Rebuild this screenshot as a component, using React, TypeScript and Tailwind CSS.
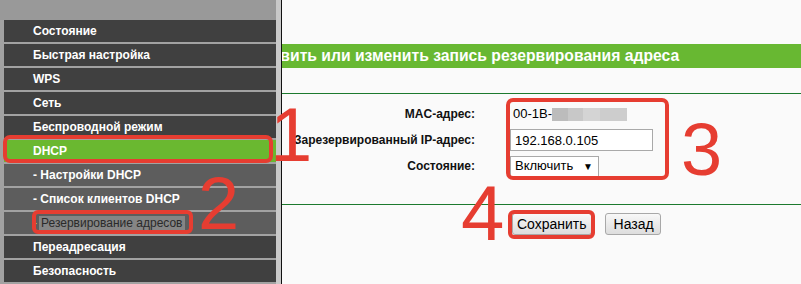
import React from "react";

const font = { fontFamily: '"Liberation Sans", Arial, sans-serif' };

type Item = { label: string; kind: "main" | "active" | "sub" | "selected" };

const menu: Item[] = [
  { label: "Состояние", kind: "main" },
  { label: "Быстрая настройка", kind: "main" },
  { label: "WPS", kind: "main" },
  { label: "Сеть", kind: "main" },
  { label: "Беспроводной режим", kind: "main" },
  { label: "DHCP", kind: "active" },
  { label: "- Настройки DHCP", kind: "sub" },
  { label: "- Список клиентов DHCP", kind: "sub" },
  { label: "Резервирование адресов", kind: "selected" },
  { label: "Переадресация", kind: "main" },
  { label: "Безопасность", kind: "main" },
];

const MenuRow = ({ item }: { item: Item }) => {
  if (item.kind === "selected") {
    return (
      <div className="h-[22px] bg-[#5d5d5d] flex items-center pl-[29px] text-[12px]">
        <span className="text-[#d6d600] mr-[2px]">-</span>
        <span className="bg-[#858585] text-[#2a2a2a] px-[2px] leading-[14px]">{item.label}</span>
      </div>
    );
  }
  const bg =
    item.kind === "active" ? "bg-[#6ab830]" : item.kind === "sub" ? "bg-[#5d5d5d]" : "bg-[#404040]";
  return (
    <div className={`h-[22px] ${bg} flex items-center pl-[29px] text-[12px] font-bold text-white`}>
      {item.label}
    </div>
  );
};

const Sidebar = () => (
  <div className="flex shrink-0 h-[284px]">
    <div className="w-[276px] bg-[#a2a2a2] pl-[4px] flex flex-col">
      <div className="h-[20px] bg-[#999999] -ml-[4px] w-[276px]" />
      <div className="flex flex-col gap-[2px]">
        {menu.map((m) => (
          <MenuRow key={m.label} item={m} />
        ))}
      </div>
    </div>
    <div className="w-[5px] bg-[#c9c9c9]" />
    <div className="w-[1px] bg-[#111]" />
  </div>
);

const Button = ({ children, className }: { children: React.ReactNode; className: string }) => (
  <button
    className={`h-[22px] ${className} text-[14px] text-black border border-[#a8a8a8] rounded-[3px] bg-gradient-to-b from-[#f8f8f8] to-[#dddddd] leading-none`}
  >
    {children}
  </button>
);

const Content = () => (
  <div className="flex-1 bg-[#fafafa] h-[284px] pt-[44px]">
    <div className="h-[24px] bg-[#68b832] overflow-hidden flex items-center">
      <span className="-ml-[41px] whitespace-nowrap text-[15.7px] font-bold text-white">
        Добавить или изменить запись резервирования адреса
      </span>
    </div>
    <div className="mt-[25px] h-[1px] bg-[#1c7a2e]" />
    <div className="pt-[7px] flex flex-col text-[12px]">
      <div className="h-[26px] flex items-center">
        <div className="w-[193px] text-right font-bold text-[#111]">MAC-адрес:</div>
        <div className="ml-[38px] flex items-center text-[13px] text-black">
          <span>00-1B-</span>
          <span className="flex h-[13px]">
            <span className="w-[16px] bg-[#bcbcbc]" />
            <span className="w-[15px] bg-[#c8c8c8]" />
            <span className="w-[17px] bg-[#d4d4d4]" />
            <span className="w-[27px] bg-[#cdcdcd]" />
          </span>
        </div>
      </div>
      <div className="h-[26px] flex items-center">
        <div className="w-[193px] text-right font-bold text-[#111]">Зарезервированный IP-адрес:</div>
        <input
          readOnly
          value="192.168.0.105"
          className="ml-[35px] w-[143px] h-[22px] border border-[#a9a9a9] bg-white px-[4px] text-[13px] text-black outline-none"
        />
      </div>
      <div className="h-[26px] flex items-center">
        <div className="w-[193px] text-right font-bold text-[#111]">Состояние:</div>
        <div className="ml-[35px] w-[89px] h-[21px] border border-[#a9a9a9] bg-white flex items-center justify-between pl-[4px] pr-[5px] text-[13px] text-black">
          <span>Включить</span>
          <span className="text-[10px]">▼</span>
        </div>
      </div>
    </div>
    <div className="mt-[25px] h-[1px] bg-[#1c7a2e]" />
    <div className="pt-[8px] pl-[230px] flex gap-[13px]">
      <Button className="px-[4px]">Сохранить</Button>
      <Button className="pl-[8px] pr-[6px]">Назад</Button>
    </div>
  </div>
);

const red = "border-[#e63d31]";

const Marks = () => (
  <div className="absolute inset-0 pointer-events-none">
    <div className={`absolute left-[3px] top-[135px] w-[270px] h-[28px] border-[4px] ${red} rounded-[7px]`} />
    <div className={`absolute left-[32px] top-[210px] w-[161px] h-[24px] border-[4px] ${red} rounded-[6px]`} />
    <div className={`absolute left-[506px] top-[98px] w-[163px] h-[82px] border-[4px] ${red} rounded-[7px]`} />
    <div className={`absolute left-[508px] top-[210px] w-[87px] h-[29px] border-[4px] ${red} rounded-[6px]`} />
    <span className="absolute left-[270px] top-[97px] text-[76px] leading-none text-[#e63d31]">1</span>
    <span className="absolute left-[198px] top-[167px] text-[74px] leading-none text-[#e63d31]">2</span>
    <span className="absolute left-[681px] top-[113px] text-[74px] leading-none text-[#e63d31]">3</span>
    <span className="absolute left-[461px] top-[174px] text-[78px] leading-none text-[#e63d31]">4</span>
  </div>
);

export default function App() {
  return (
    <div className="relative w-[801px] h-[284px] overflow-hidden flex" style={font}>
      <Sidebar />
      <Content />
      <Marks />
    </div>
  );
}
